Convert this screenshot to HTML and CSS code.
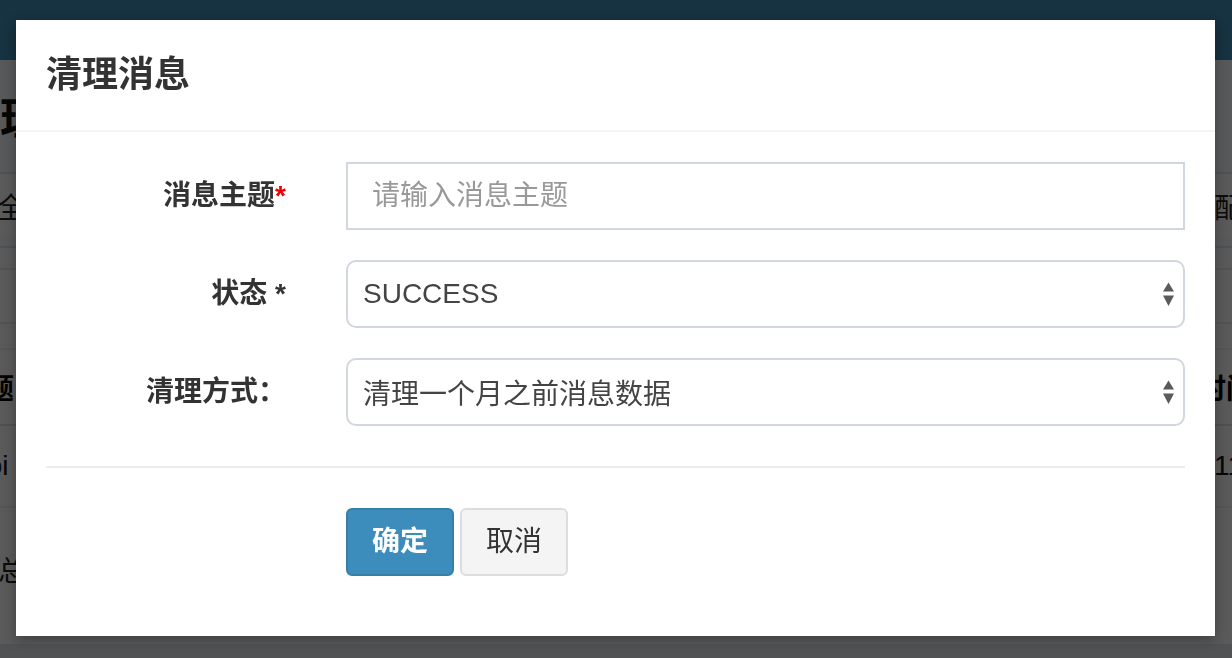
FILE: index.html
```html
<!DOCTYPE html>
<html lang="zh-CN">
<head>
<meta charset="utf-8">
<title>清理消息</title>
<link rel="stylesheet" href="styles.css">
</head>
<body>
<div class="page">
  <div class="navbar"></div>
  <div class="content-header">
    <h1 class="page-title">营销消息管理</h1>
  </div>
  <div class="box box-tools">
    <span class="edge-left tools-left">全部</span>
    <span class="edge-right tools-right">配置</span>
  </div>
  <div class="box box-table">
    <div class="search-row"></div>
    <div class="table-row table-head">
      <span class="edge-left head-left">主题</span>
      <span class="edge-right head-right">时间</span>
    </div>
    <div class="table-row table-data">
      <span class="edge-left data-left">appoi</span>
      <span class="edge-right data-right">11-12</span>
    </div>
    <div class="table-foot">
      <span class="edge-left foot-left">共总</span>
    </div>
  </div>
  <div class="footer"></div>
</div>

<div class="backdrop"></div>

<div class="modal">
  <div class="modal-header">
    <h4 class="modal-title">清理消息</h4>
  </div>
  <div class="modal-body">
    <div class="form-group">
      <label class="control-label">消息主题<span class="required">*</span></label>
      <div class="control">
        <input class="form-input" type="text" placeholder="请输入消息主题">
      </div>
    </div>
    <div class="form-group">
      <label class="control-label">状态 *</label>
      <div class="control">
        <div class="form-select">
          <span class="select-value">SUCCESS</span>
          <svg class="select-arrows" width="13" height="26" viewBox="0 0 13 26">
            <path d="M6.5 1.5 L12 10.5 L1 10.5 Z" fill="#5a5a5a"/>
            <path d="M6.5 25 L12 14.5 L1 14.5 Z" fill="#5a5a5a"/>
          </svg>
        </div>
      </div>
    </div>
    <div class="form-group">
      <label class="control-label">清理方式：</label>
      <div class="control">
        <div class="form-select">
          <span class="select-value">清理一个月之前消息数据</span>
          <svg class="select-arrows" width="13" height="26" viewBox="0 0 13 26">
            <path d="M6.5 1.5 L12 10.5 L1 10.5 Z" fill="#5a5a5a"/>
            <path d="M6.5 25 L12 14.5 L1 14.5 Z" fill="#5a5a5a"/>
          </svg>
        </div>
      </div>
    </div>
    <hr class="divider">
    <div class="form-group actions">
      <button class="btn btn-primary" type="button">确定</button>
      <button class="btn btn-default" type="button">取消</button>
    </div>
  </div>
</div>
</body>
</html>
```

FILE: styles.css
```css
* { box-sizing: border-box; }

html, body {
  margin: 0;
  padding: 0;
  width: 1232px;
  height: 658px;
  overflow: hidden;
}

body {
  background: #ecf0f5;
  font-family: "Liberation Sans", "Noto Sans CJK SC", sans-serif;
  color: #333;
}

/* ---------- background page ---------- */
.page {
  display: flex;
  flex-direction: column;
  height: 658px;
}

.navbar {
  height: 60px;
  background: #3e88ad;
  flex: none;
}

.content-header {
  height: 112px;
  flex: none;
  display: flex;
  align-items: center;
}

.page-title {
  margin: 0 0 0 -220px;
  font-size: 44px;
  font-weight: bold;
  color: #111;
  white-space: nowrap;
}

.box {
  background: #f4f4f4;
  border-top: 2px solid #dcdcdc;
  flex: none;
}

.box-tools {
  height: 66px;
  display: flex;
  align-items: center;
  margin-bottom: 8px;
}

.box-table {
  flex: 1;
  display: flex;
  flex-direction: column;
}

.edge-left, .edge-right {
  white-space: nowrap;
  font-size: 28px;
  color: #222;
}

.edge-right {
  margin-left: auto;
  overflow: visible;
}

.tools-left { margin-left: -3px; }
.tools-right { width: 18px; }

.search-row {
  height: 56px;
  margin-top: 20px;
  border-top: 2px solid #e0e0e0;
  border-bottom: 2px solid #e0e0e0;
}

.table-row {
  display: flex;
  align-items: center;
}

.table-head {
  height: 78px;
  margin-top: 24px;
  border-top: 2px solid #e8e8e8;
  border-bottom: 2px solid #d8d8d8;
  font-weight: bold;
}

.table-head .edge-left,
.table-head .edge-right { font-weight: bold; color: #000; }

.head-left { margin-left: -42px; }
.head-right { width: 34px; }

.table-data {
  height: 82px;
  border-bottom: 2px solid #e8e8e8;
}

.data-left { margin-left: -60px; color: #111; }
.data-right { width: 18px; color: #111; }

.table-foot {
  display: flex;
  align-items: center;
  height: 122px;
}

.foot-left { margin-left: -30px; }

.footer {
  height: 14px;
  flex: none;
  background: #d8dde3;
}

.backdrop {
  position: fixed;
  inset: 0;
  background: rgba(0, 0, 0, 0.63);
}

/* ---------- modal ---------- */
.modal {
  position: absolute;
  top: 20px;
  left: 16px;
  width: 1199px;
  background: #fff;
  box-shadow: 0 4px 12px rgba(0, 0, 0, 0.3);
}

.modal-header {
  padding: 29px 30px 30px;
  border-bottom: 2px solid #f4f4f4;
}

.modal-title {
  margin: 0;
  font-size: 36px;
  line-height: 51px;
  font-weight: bold;
  color: #333;
}

.modal-body {
  padding: 30px;
}

.form-group {
  display: grid;
  grid-template-columns: 270px 1fr;
  column-gap: 30px;
  margin-bottom: 30px;
}

.control-label {
  text-align: right;
  padding: 14px 30px 0 0;
  font-size: 28px;
  line-height: 40px;
  font-weight: bold;
  color: #333;
  white-space: nowrap;
}

.required { color: #e00; }

.form-input {
  display: block;
  width: 100%;
  height: 68px;
  padding: 12px 24px;
  border: 2px solid #d2d6de;
  border-radius: 0;
  font-family: inherit;
  font-size: 28px;
  line-height: 40px;
  color: #555;
  background: #fff;
  outline: none;
}

.form-input::placeholder { color: #999; }

.form-select {
  display: flex;
  align-items: center;
  height: 68px;
  padding: 0 8px 0 15px;
  border: 2px solid #d2d6de;
  border-radius: 10px;
  background: #fff;
  font-size: 28px;
  color: #444;
}

.select-value { white-space: nowrap; }

.select-arrows {
  margin-left: auto;
  flex: none;
}

.divider {
  margin: 40px 0 40px;
  border: 0;
  border-top: 2px solid #ececec;
}

.actions {
  display: flex;
  gap: 6px;
  padding-left: 300px;
}

.btn {
  height: 68px;
  padding: 12px 24px;
  border: 2px solid transparent;
  border-radius: 6px;
  font-family: inherit;
  font-size: 28px;
  line-height: 40px;
  cursor: pointer;
}

.btn-primary {
  background: #3c8dbc;
  border-color: #367fa9;
  color: #fff;
  font-weight: bold;
}

.btn-default {
  background: #f4f4f4;
  border-color: #ddd;
  color: #333;
}
```
